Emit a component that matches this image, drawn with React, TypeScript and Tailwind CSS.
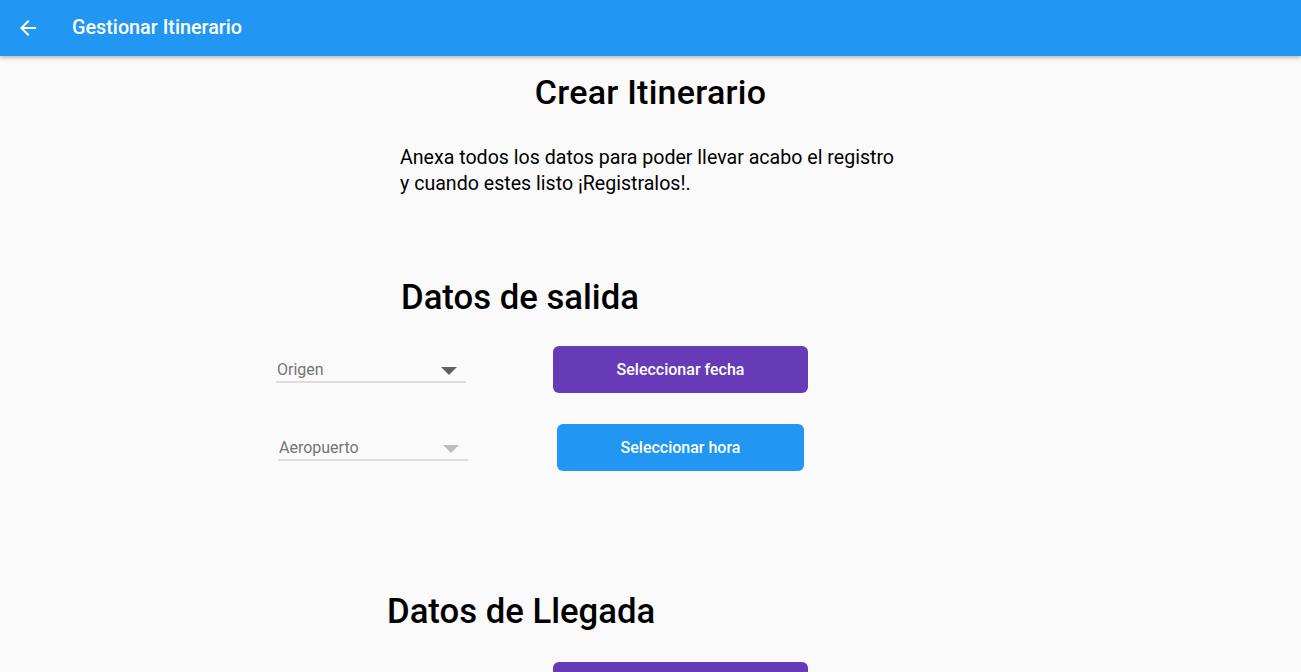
import React from "react";

function Dropdown({ label, disabled }: { label: string; disabled?: boolean }) {
  return (
    <div className="w-[190px] h-[28px] flex items-end border-b-2 border-[#dcdcdc] relative">
      <span className="text-[16px] text-[#757575] leading-[20px] pb-[1px] pl-[1px]">{label}</span>
      <svg
        className="absolute right-[9px] top-[12px]"
        width="16"
        height="8"
        viewBox="0 0 16 8"
      >
        <path d="M0 0 L16 0 L8 8 Z" fill={disabled ? "#bdbdbd" : "#616161"} />
      </svg>
    </div>
  );
}

export default function App() {
  return (
    <div
      className="w-[1301px] h-[672px] overflow-hidden bg-[#fafafa] flex flex-col"
      style={{ fontFamily: "Roboto, 'Noto Sans', sans-serif" }}
    >
      <header className="h-[56px] shrink-0 bg-[#2196F3] flex items-center shadow-[0_2px_4px_rgba(0,0,0,0.25)] relative z-10">
        <svg className="ml-[16px]" width="24" height="24" viewBox="0 0 24 24">
          <path d="M20 11H7.83l5.59-5.59L12 4l-8 8 8 8 1.41-1.41L7.83 13H20v-2z" fill="#fff" />
        </svg>
        <span className="ml-[32px] text-white text-[19.8px] font-medium leading-none">Gestionar Itinerario</span>
      </header>
      <main className="flex flex-col">
        <h1 className="mt-[16px] text-center text-[34px] font-medium text-black leading-[40px] tracking-[0.25px]">
          Crear Itinerario
        </h1>
        <p className="mt-[33px] ml-[400px] text-[19.6px] text-black leading-[26px]">
          Anexa todos los datos para poder llevar acabo el registro
          <br />y cuando estes listo ¡Registralos!.
        </p>
        <h2 className="mt-[80px] ml-[401px] text-[34.7px] font-medium text-black leading-[40px]">
          Datos de salida
        </h2>
        <div className="mt-[29px] flex items-center">
          <div className="ml-[276px] mt-[-2px]">
            <Dropdown label="Origen" />
          </div>
          <button className="ml-[87px] w-[255px] h-[47px] rounded-[6px] bg-[#673AB7] text-white text-[16px] font-medium">
            Seleccionar fecha
          </button>
        </div>
        <div className="mt-[31px] flex items-center">
          <div className="ml-[278px] mt-[-2px]">
            <Dropdown label="Aeropuerto" disabled />
          </div>
          <button className="ml-[89px] w-[247px] h-[47px] rounded-[6px] bg-[#2196F3] text-white text-[16px] font-medium">
            Seleccionar hora
          </button>
        </div>
        <h2 className="mt-[120px] ml-[387px] text-[34.7px] font-medium text-black leading-[40px]">
          Datos de Llegada
        </h2>
        <div className="mt-[31px] flex">
          <button className="ml-[553px] w-[255px] h-[47px] rounded-[6px] bg-[#673AB7] text-white text-[16px] font-medium">
            Seleccionar fecha
          </button>
        </div>
      </main>
    </div>
  );
}
